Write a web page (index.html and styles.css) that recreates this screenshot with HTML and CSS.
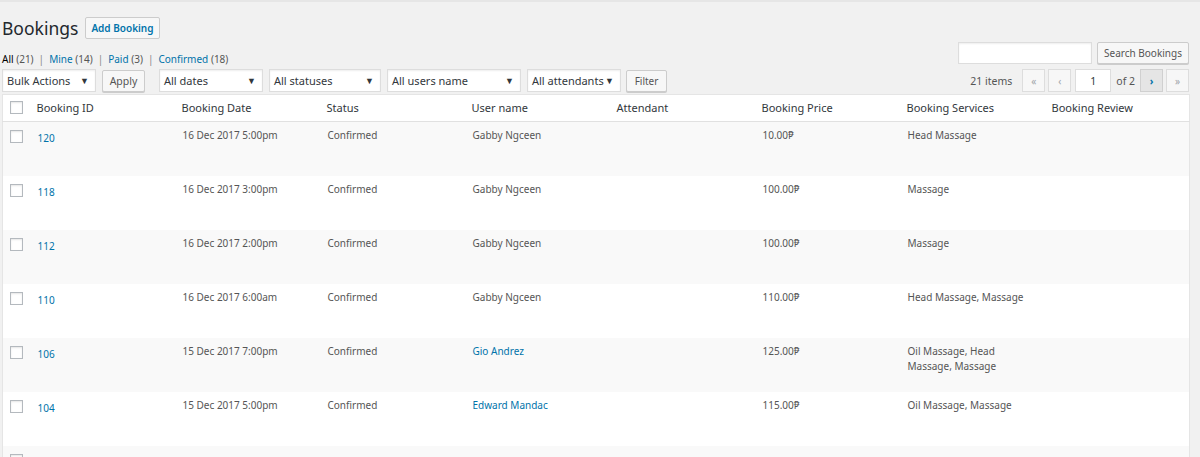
FILE: index.html
```html
<!DOCTYPE html>
<html>
<head>
<meta charset="utf-8">
<link rel="stylesheet" href="styles.css">
</head>
<body>
<div class="wrap">
  <div class="head">
    <h1>Bookings</h1>
    <a class="add-btn">Add Booking</a>
  </div>
  <div class="subrow">
    <ul class="subsub">
      <li class="current">All <span class="cnt">(21)</span></li>
      <li class="sep">|</li>
      <li><a>Mine <span class="cnt">(14)</span></a></li>
      <li class="sep">|</li>
      <li><a>Paid <span class="cnt">(3)</span></a></li>
      <li class="sep">|</li>
      <li><a>Confirmed <span class="cnt">(18)</span></a></li>
    </ul>
    <div class="search">
      <div class="search-input"></div>
      <div class="btn search-btn">Search Bookings</div>
    </div>
  </div>
  <div class="tablenav">
    <div class="actions">
      <div class="sel w-bulk"><span>Bulk Actions</span><i>▼</i></div>
      <div class="btn apply">Apply</div>
      <div class="sel w-dates"><span>All dates</span><i>▼</i></div>
      <div class="sel w-status"><span>All statuses</span><i>▼</i></div>
      <div class="sel w-users"><span>All users name</span><i>▼</i></div>
      <div class="sel w-att"><span>All attendants</span><i>▼</i></div>
      <div class="btn filter">Filter</div>
    </div>
    <div class="pages">
      <span class="items">21 items</span>
      <span class="pbtn">«</span>
      <span class="pbtn">‹</span>
      <span class="pinput">1</span>
      <span class="of">of 2</span>
      <span class="pbtn active">›</span>
      <span class="pbtn">»</span>
    </div>
  </div>
  <table class="list">
    <thead>
      <tr>
        <th class="cb"><span class="box"></span></th>
        <th>Booking ID</th>
        <th>Booking Date</th>
        <th>Status</th>
        <th>User name</th>
        <th>Attendant</th>
        <th>Booking Price</th>
        <th>Booking Services</th>
        <th>Booking Review</th>
      </tr>
    </thead>
    <tbody>
      <tr>
        <td class="cb"><span class="box"></span></td>
        <td class="id"><a>120</a></td>
        <td>16 Dec 2017 5:00pm</td>
        <td>Confirmed</td>
        <td>Gabby Ngceen</td>
        <td></td>
        <td>10.00₱</td>
        <td>Head Massage</td>
        <td></td>
      </tr>
      <tr>
        <td class="cb"><span class="box"></span></td>
        <td class="id"><a>118</a></td>
        <td>16 Dec 2017 3:00pm</td>
        <td>Confirmed</td>
        <td>Gabby Ngceen</td>
        <td></td>
        <td>100.00₱</td>
        <td>Massage</td>
        <td></td>
      </tr>
      <tr>
        <td class="cb"><span class="box"></span></td>
        <td class="id"><a>112</a></td>
        <td>16 Dec 2017 2:00pm</td>
        <td>Confirmed</td>
        <td>Gabby Ngceen</td>
        <td></td>
        <td>100.00₱</td>
        <td>Massage</td>
        <td></td>
      </tr>
      <tr>
        <td class="cb"><span class="box"></span></td>
        <td class="id"><a>110</a></td>
        <td>16 Dec 2017 6:00am</td>
        <td>Confirmed</td>
        <td>Gabby Ngceen</td>
        <td></td>
        <td>110.00₱</td>
        <td>Head Massage, Massage</td>
        <td></td>
      </tr>
      <tr>
        <td class="cb"><span class="box"></span></td>
        <td class="id"><a>106</a></td>
        <td>15 Dec 2017 7:00pm</td>
        <td>Confirmed</td>
        <td><a>Gio Andrez</a></td>
        <td></td>
        <td>125.00₱</td>
        <td>Oil Massage, Head Massage, Massage</td>
        <td></td>
      </tr>
      <tr>
        <td class="cb"><span class="box"></span></td>
        <td class="id"><a>104</a></td>
        <td>15 Dec 2017 5:00pm</td>
        <td>Confirmed</td>
        <td><a>Edward Mandac</a></td>
        <td></td>
        <td>115.00₱</td>
        <td>Oil Massage, Massage</td>
        <td></td>
      </tr>
      <tr>
        <td class="cb"><span class="box"></span></td>
        <td></td><td></td><td></td><td></td><td></td><td></td><td></td><td></td>
      </tr>
    </tbody>
  </table>
</div>
</body>
</html>
```
FILE: styles.css
```css
* { box-sizing: border-box; }
html, body {
  margin: 0;
  padding: 0;
  background: #f1f1f1;
  font-family: "Noto Sans", "Open Sans", sans-serif;
  color: #444;
  overflow: hidden;
}
body { border-top: 2px solid #e6e6e6; height: 457px; }
a { color: #0073aa; text-decoration: none; }

.wrap { width: 1187px; margin-left: 2px; }

.head { display: flex; height: 52px; padding-top: 13px; align-items: flex-start; }
.head h1 {
  margin: 0;
  font-size: 17.5px;
  font-weight: 400;
  color: #23282d;
  line-height: 26px;
}
.add-btn {
  margin-left: 7px;
  margin-top: 2px;
  height: 22px;
  line-height: 20px;
  padding: 0 5px;
  border: 1px solid #ccc;
  background: #f7f7f7;
  border-radius: 2px;
  font-size: 10px;
  font-weight: 600;
  color: #0073aa;
}

.subrow { display: flex; justify-content: space-between; align-items: flex-start; margin-top: -12px; height: 26px; }
.subsub {
  list-style: none; margin: 0; padding: 0;
  display: flex; gap: 5px;
  font-size: 10px;
  color: #666;
  margin-top: 10px;
}
.subsub .current { color: #000; }
.subsub .cnt { color: #555; }
.subsub .sep { color: #888; }

.search { display: flex; gap: 5px; }
.search-input {
  width: 134px; height: 22px;
  background: #fff; border: 1px solid #ddd;
  box-shadow: inset 0 1px 2px rgba(0,0,0,.07);
  margin-left: 0;
}
.btn {
  height: 22px;
  border: 1px solid #ccc;
  background: #f7f7f7;
  border-radius: 2px;
  box-shadow: 0 1px 0 #ccc;
  font-size: 10px;
  color: #555;
  display: flex; align-items: center; justify-content: center;
}
.search-btn { width: 92px; }

.tablenav { display: flex; justify-content: space-between; align-items: center; height: 25px; }
.actions { display: flex; align-items: center; }
.sel {
  height: 23px;
  background: #fff;
  border: 1px solid #ddd;
  box-shadow: inset 0 1px 2px rgba(0,0,0,.07);
  display: flex; align-items: center; justify-content: space-between;
  padding: 0 6px 0 4px;
  font-size: 11px;
  color: #32373c;
}
.sel i { font-style: normal; font-size: 9px; color: #32373c; }
.w-bulk { width: 94px; }
.apply { width: 43px; margin-left: 6px; font-size: 10.5px; }
.w-dates { width: 104px; margin-left: 14px; }
.w-status { width: 112px; margin-left: 6px; }
.w-users { width: 134px; margin-left: 6px; }
.w-att { width: 94px; margin-left: 6px; }
.filter { width: 41px; margin-left: 5px; }

.pages { display: flex; align-items: center; font-size: 10.5px; color: #555; }
.items { margin-right: 7px; }
.pbtn {
  width: 23px; height: 23px;
  border: 1px solid #ddd;
  background: #f7f7f7;
  color: #a0a5aa;
  display: flex; align-items: center; justify-content: center;
  font-size: 10px;
  margin-left: 3px;
}
.pbtn.active { background: #e5e5e5; border-color: #d0d0d0; color: #0073aa; font-weight: 700; margin-left: 0; }
.pinput {
  width: 36px; height: 23px; margin-left: 4px;
  background: #fff; border: 1px solid #ddd;
  display: flex; align-items: center; justify-content: center;
  color: #32373c; font-size: 10.5px;
}
.of { margin: 0 5px 0 5px; }

.list {
  margin-top: 1px;
  width: 1187px;
  border-collapse: collapse;
  table-layout: fixed;
  background: #fff;
  border: 1px solid #e5e5e5;
}
.list th, .list td { width: 145px; text-align: left; vertical-align: top; }
.list th.cb, .list td.cb { width: 27px; padding: 0 0 0 7px; }
.list thead tr { height: 27px; border-bottom: 1px solid #e1e1e1; }
.list th {
  font-weight: 400;
  font-size: 11px;
  color: #32373c;
  padding: 5px 8px 0 7px;
  line-height: 16px;
}
.list th.cb { padding-top: 6px; }
.list tbody tr { height: 54px; }
.list tbody tr:nth-child(odd) { background: #f9f9f9; }
.list td {
  font-size: 10px;
  color: #555;
  padding: 6px 8px 0 8px;
  line-height: 15px;
}
.list td.id { padding-top: 9px; font-size: 10px; }
.list td.cb { padding-top: 8px; }
.box {
  display: block;
  width: 13px; height: 13px;
  border: 1px solid #b4b9be;
  background: #fff;
  box-shadow: inset 0 1px 2px rgba(0,0,0,.1);
}
```
